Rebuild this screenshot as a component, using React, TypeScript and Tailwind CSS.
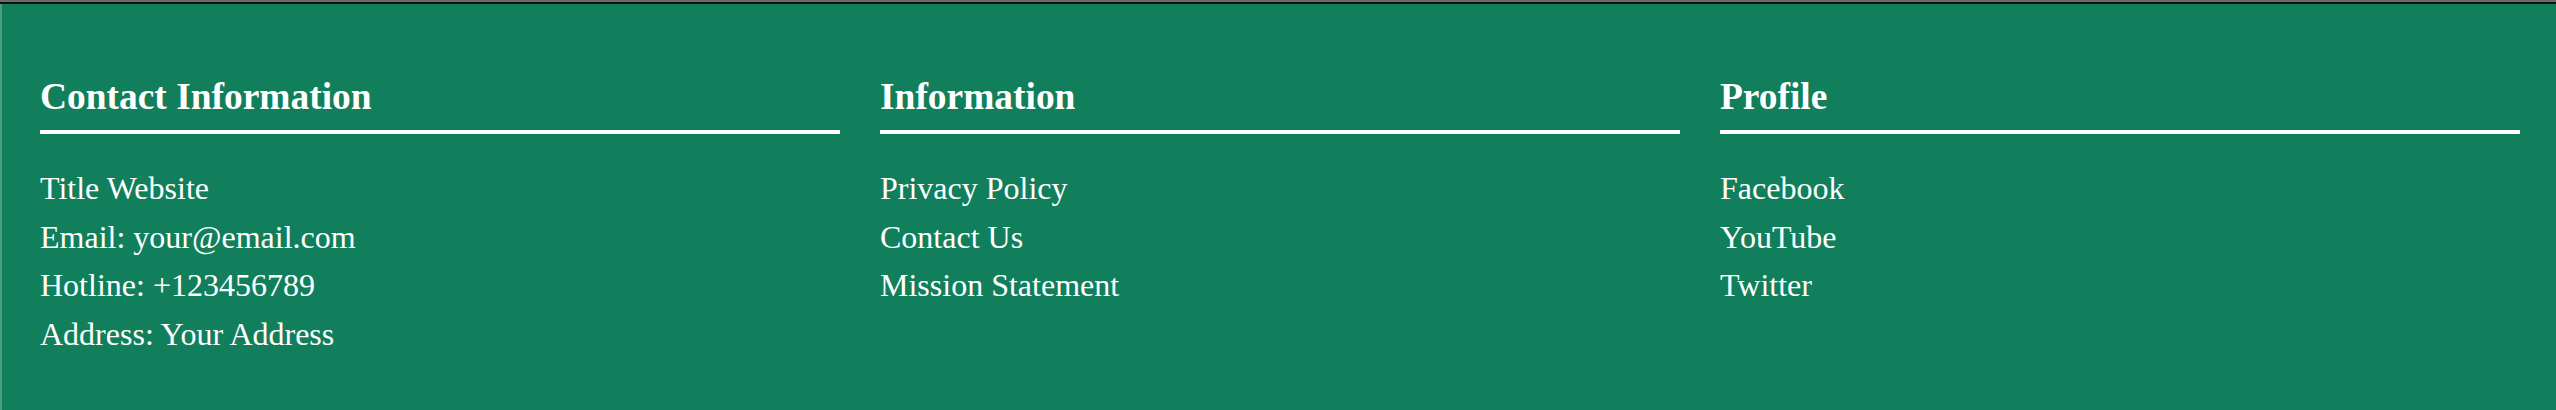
const columns = [
  {
    title: 'Contact Information',
    items: ['Title Website', 'Email: your@email.com', 'Hotline: +123456789', 'Address: Your Address'],
  },
  {
    title: 'Information',
    items: ['Privacy Policy', 'Contact Us', 'Mission Statement'],
  },
  {
    title: 'Profile',
    items: ['Facebook', 'YouTube', 'Twitter'],
  },
];

export default function App() {
  return (
    <div className="w-full h-[410px] flex flex-col bg-[#117f5b] font-['Liberation_Serif','Times_New_Roman',serif] text-white">
      {/* top edge of the page above */}
      <div className="h-[2px] bg-[#6b6b6b]" />
      <div className="h-[2px] bg-[#111111]" />

      <footer className="flex-1 border-l-2 border-[#4f9c7e] pl-[38px] pr-[36px] pt-[72px]">
        <div className="grid grid-cols-3 gap-[40px]">
          {columns.map((col) => (
            <FooterColumn key={col.title} title={col.title} items={col.items} />
          ))}
        </div>
      </footer>
    </div>
  );
}

function FooterColumn({ title, items }: { title: string; items: string[] }) {
  return (
    <div>
      <h3 className="text-[37.44px] leading-[42px] font-bold pb-[12px] border-b-4 border-white">{title}</h3>
      <ul className="mt-[30px]">
        {items.map((item) => (
          <li key={item} className="text-[32px] leading-[48.5px]">
            <a href="#">{item}</a>
          </li>
        ))}
      </ul>
    </div>
  );
}
